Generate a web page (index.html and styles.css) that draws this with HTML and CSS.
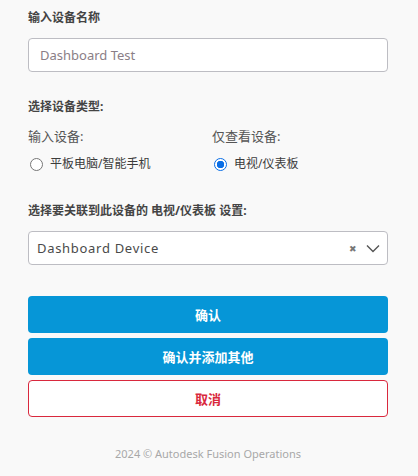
FILE: index.html
```html
<!DOCTYPE html>
<html lang="zh">
<head>
<meta charset="utf-8">
<link rel="stylesheet" href="styles.css">
</head>
<body>
<div class="page">
  <div class="field-label">输入设备名称</div>
  <div class="input">Dashboard Test</div>

  <div class="section-label">选择设备类型:</div>
  <div class="types">
    <div class="col">
      <div class="col-label">输入设备:</div>
      <label class="radio"><span class="dot"></span><span>平板电脑/智能手机</span></label>
    </div>
    <div class="col">
      <div class="col-label">仅查看设备:</div>
      <label class="radio"><span class="dot checked"></span><span>电视/仪表板</span></label>
    </div>
  </div>

  <div class="section-label assoc">选择要关联到此设备的 电视/仪表板 设置:</div>
  <div class="select">
    <span class="select-text">Dashboard Device</span>
    <span class="clear">&#x2716;</span>
    <svg class="chev" width="14" height="9" viewBox="0 0 14 9"><path d="M1 1.5 L7 7.5 L13 1.5" fill="none" stroke="#555" stroke-width="1.4"/></svg>
  </div>

  <div class="buttons">
    <button class="btn primary">确认</button>
    <button class="btn primary">确认并添加其他</button>
    <button class="btn cancel">取消</button>
  </div>

  <div class="footer">2024 © Autodesk Fusion Operations</div>
</div>
</body>
</html>
```
FILE: styles.css
```css
* { box-sizing: border-box; }
html, body { margin: 0; padding: 0; background: #f9f9f9; }
body {
  font-family: "Noto Sans", "Noto Sans CJK SC", sans-serif;
  color: #3c3c3c;
}
.page {
  width: 360px;
  margin-left: 28px;
  padding-top: 9px;
  display: flex;
  flex-direction: column;
}
.field-label, .section-label {
  font-size: 12px;
  font-weight: bold;
  line-height: 18px;
  color: #444;
}
.input {
  margin-top: 11px;
  height: 34px;
  border: 1px solid #bdbdc3;
  border-radius: 4px;
  background: #fff;
  padding: 0 11px;
  font-size: 13px;
  line-height: 32px;
  color: #8a7e86;
}
.section-label { margin-top: 26px; }
.types {
  margin-top: 11px;
  display: grid;
  grid-template-columns: 184px 1fr;
}
.col-label {
  font-size: 13px;
  line-height: 18px;
  color: #555;
}
.radio {
  margin-top: 10px;
  display: flex;
  align-items: center;
  gap: 7px;
  font-size: 12px;
  line-height: 18px;
  color: #3c3c3c;
  padding-left: 2px;
}
.dot {
  width: 13px;
  height: 13px;
  border-radius: 50%;
  border: 1px solid #767676;
  background: #fff;
  flex: none;
}
.dot.checked {
  border: 1.5px solid #0a6ee6;
  background: radial-gradient(circle, #0a6ee6 0 3.5px, #fff 4px);
}
.assoc { margin-top: 29px; }
.select {
  margin-top: 11px;
  height: 34px;
  border: 1px solid #bdbdc3;
  border-radius: 4px;
  background: #fff;
  display: flex;
  align-items: center;
  padding: 0 7px 0 8px;
}
.select-text {
  flex: 1;
  font-size: 13px;
  letter-spacing: 0.7px;
  color: #4a4a4a;
}
.clear {
  font-size: 9px;
  color: #777;
  margin-right: 9px;
}
.chev { display: block; }
.buttons {
  margin-top: 31px;
  display: flex;
  flex-direction: column;
  gap: 5px;
}
.btn {
  height: 37px;
  border-radius: 4px;
  font-family: inherit;
  font-size: 13px;
  font-weight: bold;
  cursor: pointer;
}
.primary {
  background: #0696d7;
  border: none;
  color: #fff;
}
.cancel {
  background: #fff;
  border: 1px solid #d9283d;
  color: #d9283d;
}
.footer {
  margin-top: 29px;
  text-align: center;
  font-size: 11px;
  color: #a8a8a8;
}
```
